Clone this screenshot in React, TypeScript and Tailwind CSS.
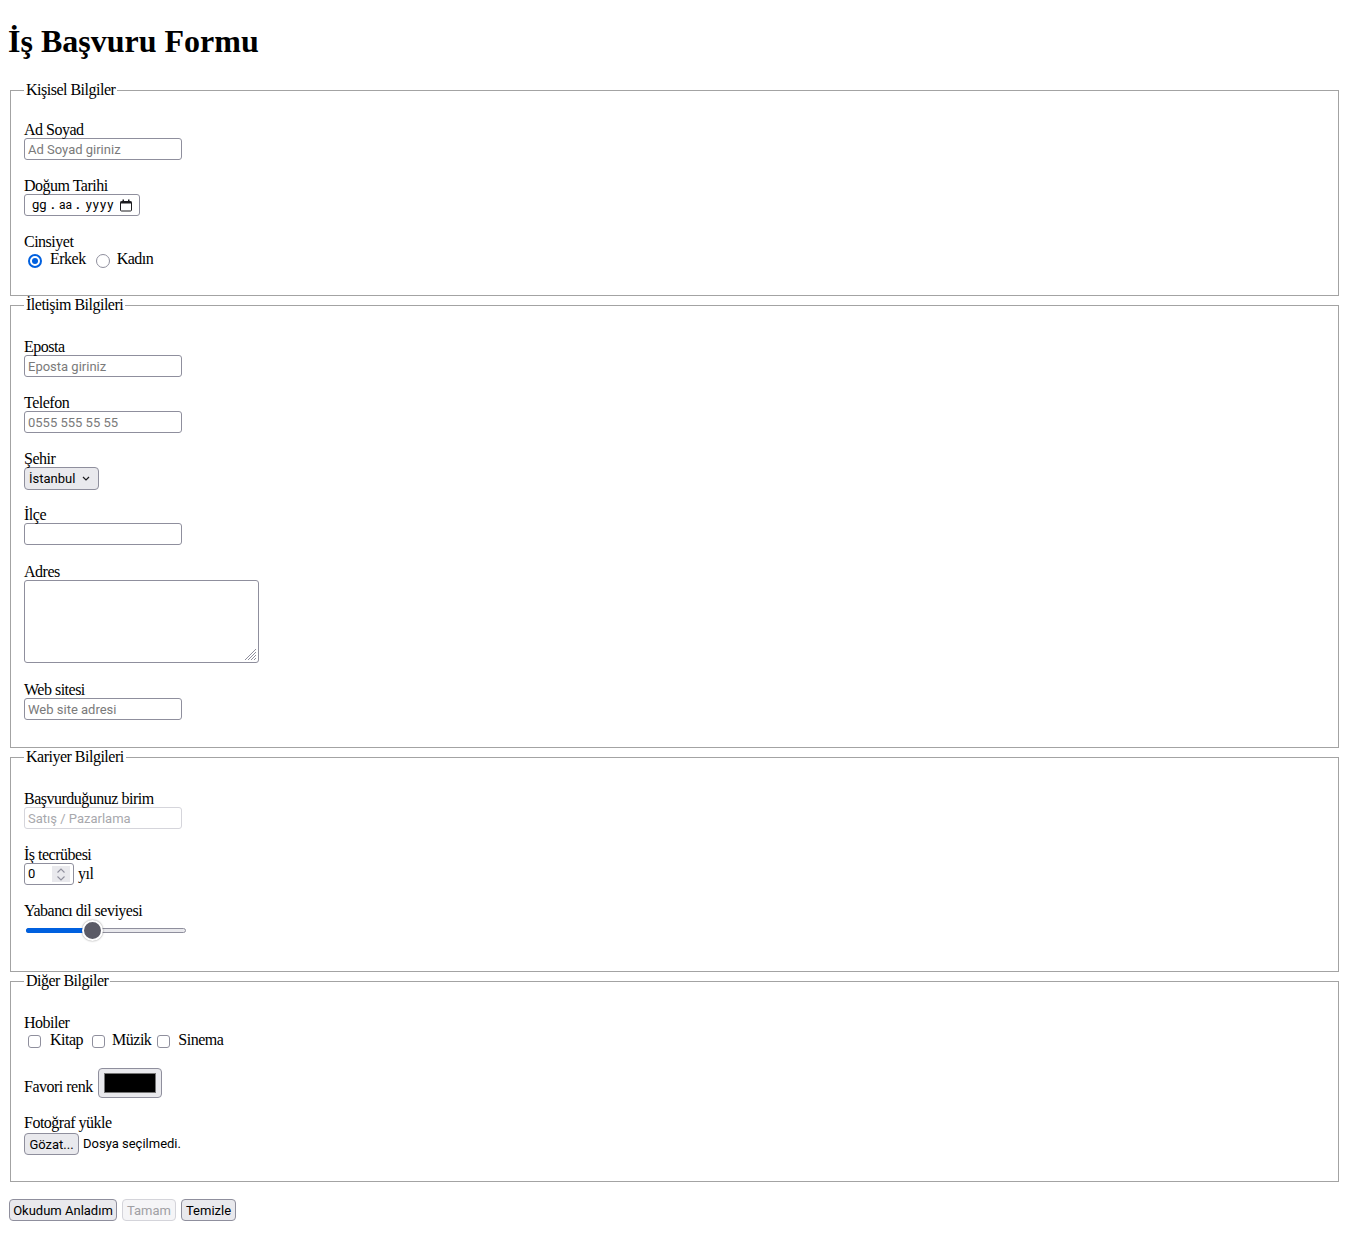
import type { ReactNode } from 'react';

const ui = "font-['Roboto','Liberation_Sans',sans-serif] text-[13px] tracking-normal";

function Label({ children, className = '' }: { children: ReactNode; className?: string }) {
  return <div className={`h-[17px] leading-[17px] ${className}`}>{children}</div>;
}

function TextBox({ placeholder, disabled = false }: { placeholder?: string; disabled?: boolean }) {
  return (
    <input
      type="text"
      placeholder={placeholder}
      disabled={disabled}
      className={`block h-[22px] w-[158px] rounded-[3px] border bg-white px-[3px] outline-none ${ui} ${
        disabled
          ? 'border-[#d5d5db] placeholder:text-[#a8a8ad]'
          : 'border-[#8f8f9d] placeholder:text-[#7a7a7a]'
      }`}
    />
  );
}

function Section({ title, first, className, children }: { title: string; first: string; className: string; children: ReactNode }) {
  return (
    <fieldset className={`mx-[2px] min-w-0 border border-[#a3a3a3] px-[13px] ${className}`}>
      <legend className="px-[2px] leading-[18px]">{title}</legend>
      <div className={first}>{children}</div>
    </fieldset>
  );
}

function Radio({ checked = false }: { checked?: boolean }) {
  if (checked) {
    return (
      <span className="mt-[4px] flex h-[14px] w-[14px] items-center justify-center rounded-full border-[2px] border-[#0060df] bg-white">
        <span className="block h-[6px] w-[6px] rounded-full bg-[#0060df]" />
      </span>
    );
  }
  return <span className="mt-[4px] block h-[14px] w-[14px] rounded-full border border-[#8f8f9d] bg-white" />;
}

function Checkbox() {
  return <span className="mt-[4px] block h-[13px] w-[13px] rounded-[3px] border border-[#8f8f9d] bg-white" />;
}

function Button({ children, width, disabled = false }: { children: ReactNode; width: string; disabled?: boolean }) {
  return (
    <button
      type="button"
      disabled={disabled}
      className={`flex h-[22px] items-center justify-center rounded-[4px] border leading-none ${ui} ${width} ${
        disabled ? 'border-[#d4d4da] bg-[#f5f5f7] text-[#a0a0a4]' : 'border-[#8f8f9d] bg-[#e9e9ed] text-black'
      }`}
    >
      {children}
    </button>
  );
}

function CalendarIcon() {
  return (
    <svg width="14" height="13" viewBox="0 0 14 13" fill="none">
      <rect x="1.5" y="2.5" width="11" height="9.5" rx="1" stroke="#1b1b1f" strokeWidth="1" />
      <rect x="1.5" y="2.5" width="11" height="2" fill="#1b1b1f" />
      <rect x="3.5" y="0.5" width="1.5" height="2" fill="#1b1b1f" />
      <rect x="9" y="0.5" width="1.5" height="2" fill="#1b1b1f" />
    </svg>
  );
}

export default function App() {
  return (
    <div className="min-h-[1237px] bg-white p-2 font-['Liberation_Serif',serif] text-base tracking-[-0.5px] text-black">
      <h1 className="mt-[15px] mb-[21px] text-[32px] font-bold leading-[37px] tracking-normal">İş Başvuru Formu</h1>

      <form>
        {/* Kişisel Bilgiler */}
        <Section title="Kişisel Bilgiler" first="pt-[22px]" className="pb-[27px]">
          <Label>Ad Soyad</Label>
          <TextBox placeholder="Ad Soyad giriniz" />

          <Label className="mt-[17px]">Doğum Tarihi</Label>
          <div className={`flex h-[22px] w-[116px] items-center rounded-[3px] border border-[#8f8f9d] pl-[7px] pr-[6px] ${ui}`}>
            <span className="w-[14px] text-center">gg</span>
            <span className="ml-[4px] w-[6px] text-center font-bold">.</span>
            <span className="ml-[3px] w-[12px] text-center text-[12px]">aa</span>
            <span className="ml-[4px] w-[6px] text-center font-bold">.</span>
            <span className="ml-[3px] w-[32px] text-center tracking-[1px]">yyyy</span>
            <span className="ml-auto">
              <CalendarIcon />
            </span>
          </div>

          <Label className="mt-[17px]">Cinsiyet</Label>
          <div className="flex h-[18px] items-start leading-[18px]">
            <span className="ml-[4px]">
              <Radio checked />
            </span>
            <span className="ml-[8px]">Erkek</span>
            <span className="ml-[10px]">
              <Radio />
            </span>
            <span className="ml-[7px]">Kadın</span>
          </div>
        </Section>

        {/* İletişim Bilgileri */}
        <Section title="İletişim Bilgileri" first="pt-[24px]" className="pb-[27px]">
          <Label>Eposta</Label>
          <TextBox placeholder="Eposta giriniz" />

          <Label className="mt-[17px]">Telefon</Label>
          <TextBox placeholder="0555 555 55 55" />

          <Label className="mt-[17px]">Şehir</Label>
          <div className={`flex h-[23px] w-[75px] items-center rounded-[4px] border border-[#8f8f9d] bg-[#e9e9ed] pl-[4px] ${ui}`}>
            <span>İstanbul</span>
            <svg className="ml-auto mr-[8px]" width="8" height="5" viewBox="0 0 8 5" fill="none">
              <path d="M1 1l3 3 3-3" stroke="#1b1b1f" strokeWidth="1.2" />
            </svg>
          </div>

          <Label className="mt-[16px]">İlçe</Label>
          <TextBox />

          <Label className="mt-[18px]">Adres</Label>
          <div className="relative h-[83px] w-[235px]">
            <textarea className={`block h-full w-full resize-none rounded-[3px] border border-[#8f8f9d] p-[2px] outline-none ${ui}`} />
            <svg className="absolute bottom-[2px] right-[2px]" width="13" height="13" viewBox="0 0 13 13">
              <path d="M12 1L1 12M12 4L4 12M12 7L7 12M12 10L10 12" stroke="#8f8f9d" strokeWidth="1" />
            </svg>
          </div>

          <Label className="mt-[18px]">Web sitesi</Label>
          <TextBox placeholder="Web site adresi" />
        </Section>

        {/* Kariyer Bilgileri */}
        <Section title="Kariyer Bilgileri" first="pt-[24px]" className="pb-[30px]">
          <Label>Başvurduğunuz birim</Label>
          <TextBox placeholder="Satış / Pazarlama" disabled />

          <Label className="mt-[17px]">İş tecrübesi</Label>
          <div className="flex items-end">
            <div className={`relative h-[22px] w-[50px] rounded-[3px] border border-[#8f8f9d] pl-[3px] leading-[20px] ${ui}`}>
              0
              <div className="absolute right-[3px] top-[2px] bottom-[2px] flex w-[18px] flex-col items-center justify-center gap-[3px] bg-[#e9e9ed]">
                <svg width="8" height="5" viewBox="0 0 8 5" fill="none">
                  <path d="M0.5 4.5l3.5-3.5 3.5 3.5" stroke="#8f8f9d" strokeWidth="1.1" />
                </svg>
                <svg width="8" height="5" viewBox="0 0 8 5" fill="none">
                  <path d="M0.5 0.5l3.5 3.5 3.5-3.5" stroke="#8f8f9d" strokeWidth="1.1" />
                </svg>
              </div>
            </div>
            <span className="mb-[3px] ml-[4px] leading-[17px]">yıl</span>
          </div>

          <Label className="mt-[17px]">Yabancı dil seviyesi</Label>
          <div className="relative h-[22px] w-[164px]">
            <div className="absolute left-[2px] right-[2px] top-[9px] h-[5px] rounded-full border border-[#8f8f9d] bg-[#e9e9ed]" />
            <div className="absolute left-[2px] top-[9px] h-[5px] w-[66px] rounded-full bg-[#0060df]" />
            <div className="absolute left-[58px] top-[1px] h-[21px] w-[21px] rounded-full border-2 border-white bg-[#5b5b66] shadow-[0_0_2px_rgba(0,0,0,0.45)]" />
          </div>
        </Section>

        {/* Diğer Bilgiler */}
        <Section title="Diğer Bilgiler" first="pt-[24px]" className="pb-[26px]">
          <Label>Hobiler</Label>
          <div className="flex h-[18px] items-start leading-[18px]">
            <span className="ml-[4px]">
              <Checkbox />
            </span>
            <span className="ml-[9px]">Kitap</span>
            <span className="ml-[9px]">
              <Checkbox />
            </span>
            <span className="ml-[7px]">Müzik</span>
            <span className="ml-[6px]">
              <Checkbox />
            </span>
            <span className="ml-[8px]">Sinema</span>
          </div>

          <div className="mt-[19px] flex items-end">
            <span className="mb-[3px] leading-[17px]">Favori renk</span>
            <div className="ml-[5px] flex h-[30px] w-[64px] items-center justify-center rounded-[4px] border border-[#8f8f9d] bg-[#e9e9ed]">
              <div className="h-[20px] w-[52px] border border-[#767676] bg-black" />
            </div>
          </div>

          <Label className="mt-[16px]">Fotoğraf yükle</Label>
          <div className={`mt-[2px] flex items-center ${ui}`}>
            <Button width="w-[55px]">Gözat...</Button>
            <span className="ml-[4px]">Dosya seçilmedi.</span>
          </div>
        </Section>

        <div className="mt-[17px] ml-[1px] flex gap-[5px]">
          <Button width="w-[108px]">Okudum Anladım</Button>
          <Button width="w-[54px]" disabled>
            Tamam
          </Button>
          <Button width="w-[55px]">Temizle</Button>
        </div>
      </form>
    </div>
  );
}
